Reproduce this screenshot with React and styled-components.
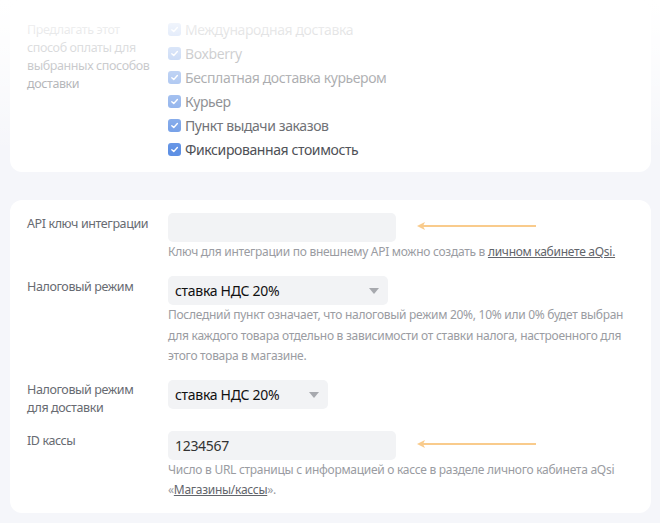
import React from "react";
import styled, { createGlobalStyle } from "styled-components";

const Global = createGlobalStyle`
  html, body { margin: 0; padding: 0; background: #f5f6fa; }
  body { font-family: "Noto Sans", "Open Sans", sans-serif; color: #333; }
`;

const Page = styled.div`
  width: 660px;
  height: 523px;
  overflow: hidden;
  padding: 0 9px 0 10px;
  box-sizing: border-box;
  display: flex;
  flex-direction: column;
  gap: 28px;
`;

const TopWrap = styled.div`
  position: relative;
  margin: 0 -9px 0 -10px;
  padding: 0 9px 0 10px;
`;

const Fade = styled.div`
  position: absolute;
  inset: 0;
  pointer-events: none;
  background: linear-gradient(
    to bottom,
    rgba(255, 255, 255, 1) 0%,
    rgba(255, 255, 255, 0.92) 12%,
    rgba(255, 255, 255, 0.75) 30%,
    rgba(255, 255, 255, 0.5) 50%,
    rgba(255, 255, 255, 0.25) 70%,
    rgba(255, 255, 255, 0) 88%
  );
`;

const Card = styled.div`
  background: #fff;
  border-radius: 12px;
  padding: ${(p) => p.$pad};
  display: flex;
  flex-direction: column;
  gap: ${(p) => p.$gap || "0"};
`;

const Row = styled.div`
  display: grid;
  grid-template-columns: 141px 1fr;
  align-items: start;
  position: relative;
`;

const Label = styled.div`
  font-size: 12.5px;
  letter-spacing: -0.4px;
  line-height: 18px;
  color: #686b72;
  padding-top: ${(p) => p.$pt || "2px"};
  width: ${(p) => p.$w || "auto"};
`;

const Field = styled.div`
  display: flex;
  flex-direction: column;
`;

const CheckList = styled.div`
  display: flex;
  flex-direction: column;
`;

const CheckRow = styled.label`
  display: flex;
  align-items: center;
  gap: 4px;
  height: 24px;
  font-size: 14px;
  letter-spacing: -0.4px;
  color: #4d4f55;
`;

const Box = styled.span`
  width: 13px;
  height: 13px;
  border-radius: 3px;
  background: #5e90e4;
  display: inline-flex;
  align-items: center;
  justify-content: center;
  flex: none;
`;

const Input = styled.div`
  width: ${(p) => p.$w};
  height: 29px;
  box-sizing: border-box;
  background: #f2f3f5;
  border-radius: 5px;
  padding: 0 7px;
  font-size: 14px;
  letter-spacing: -0.3px;
  display: flex;
  align-items: center;
  color: #333;
`;

const Select = styled(Input)`
  justify-content: space-between;
  padding: 0 9px 0 7px;
  color: #111;
`;

const Caret = styled.span`
  width: 0;
  height: 0;
  border-left: 5px solid transparent;
  border-right: 5px solid transparent;
  border-top: 6px solid #a7a9ae;
`;

const Help = styled.p`
  margin: 0;
  font-size: 12px;
  letter-spacing: -0.28px;
  line-height: 20.5px;
  color: #9a9ca2;
`;

const Link = styled.a`
  color: #62656b;
  text-decoration: underline;
`;

const Arrow = styled.svg`
  position: absolute;
  left: 389px;
  top: ${(p) => p.$top};
`;

const Check = () => (
  <svg width="9" height="9" viewBox="0 0 10 10">
    <path d="M2 5.2 L4.2 7.3 L8.2 2.8" fill="none" stroke="#fff" strokeWidth="1.5" strokeLinecap="round" strokeLinejoin="round" />
  </svg>
);

const ArrowIcon = ({ top }) => (
  <Arrow $top={top} width="124" height="10" viewBox="0 0 124 10">
    <line x1="4" y1="5" x2="120" y2="5" stroke="#f9cb8c" strokeWidth="2" />
    <path d="M1 5 L9 1 L7 5 L9 9 Z" fill="#f9cb8c" />
  </Arrow>
);

const deliveries = [
  "Международная доставка",
  "Boxberry",
  "Бесплатная доставка курьером",
  "Курьер",
  "Пункт выдачи заказов",
  "Фиксированная стоимость",
];

export default function App() {
  return (
    <>
      <Global />
      <Page>
        <TopWrap>
          <Card $pad="17px 17px 11px">
            <Row>
              <Label $pt="4px" $w="126px">
                Предлагать этот способ оплаты для выбранных способов доставки
              </Label>
              <CheckList>
                {deliveries.map((d) => (
                  <CheckRow key={d}>
                    <Box>
                      <Check />
                    </Box>
                    {d}
                  </CheckRow>
                ))}
              </CheckList>
            </Row>
          </Card>
          <Fade />
        </TopWrap>
        <Card $pad="13px 17px 12px" $gap="13.5px">
          <Row>
            <Label>API ключ интеграции</Label>
            <Field>
              <Input $w="228px" />
              <Help>
                Ключ для интеграции по внешнему API можно создать в{" "}
                <Link>личном кабинете aQsi.</Link>
              </Help>
            </Field>
            <ArrowIcon top="8px" />
          </Row>
          <Row>
            <Label>Налоговый режим</Label>
            <Field>
              <Select $w="220px">
                ставка НДС 20%
                <Caret />
              </Select>
              <Help>
                Последний пункт означает, что налоговый режим 20%, 10% или 0% будет выбран
                для каждого товара отдельно в зависимости от ставки налога, настроенного для
                этого товара в магазине.
              </Help>
            </Field>
          </Row>
          <Row>
            <Label $pt="1px" $w="118px">Налоговый режим для доставки</Label>
            <Field>
              <Select $w="160px">
                ставка НДС 20%
                <Caret />
              </Select>
            </Field>
          </Row>
          <Row>
            <Label $pt="1px">ID кассы</Label>
            <Field>
              <Input $w="228px">1234567</Input>
              <Help>
                Число в URL страницы с информацией о кассе в разделе личного кабинета aQsi
                <br />
                «<Link>Магазины/кассы</Link>».
              </Help>
            </Field>
            <ArrowIcon top="8px" />
          </Row>
        </Card>
      </Page>
    </>
  );
}
